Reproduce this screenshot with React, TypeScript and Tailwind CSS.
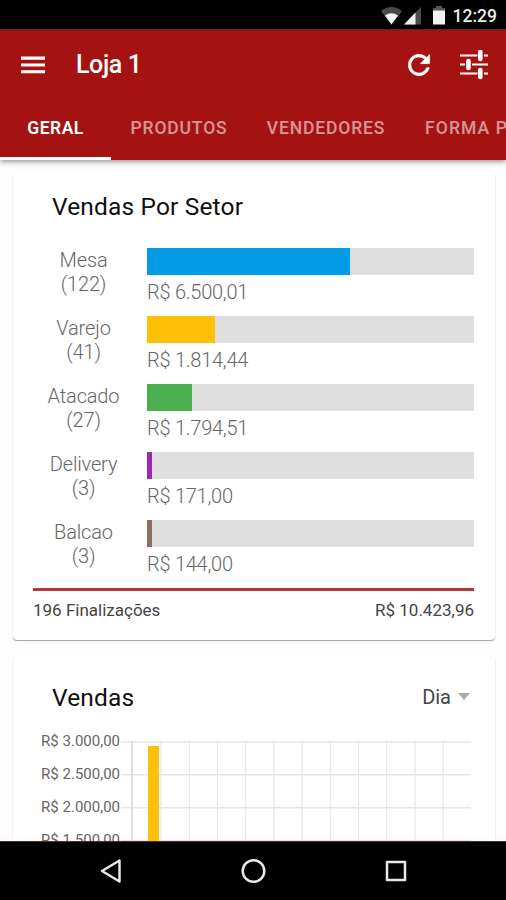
import type { ReactNode } from 'react'
import clsx from 'clsx'

const tabs = ['GERAL', 'PRODUTOS', 'VENDEDORES', 'FORMA PAGAMENTO']

const sectors = [
    { name: 'Mesa', count: 122, total: 'R$ 6.500,01', percent: 62.2, color: 'bg-[#039be5]' },
    { name: 'Varejo', count: 41, total: 'R$ 1.814,44', percent: 20.8, color: 'bg-[#ffc107]' },
    { name: 'Atacado', count: 27, total: 'R$ 1.794,51', percent: 13.8, color: 'bg-[#4caf50]' },
    { name: 'Delivery', count: 3, total: 'R$ 171,00', percent: 1.6, color: 'bg-[#9c27b0]' },
    { name: 'Balcao', count: 3, total: 'R$ 144,00', percent: 1.6, color: 'bg-[#8d6e63]' },
]

const axisLabels = ['R$ 3.000,00', 'R$ 2.500,00', 'R$ 2.000,00', 'R$ 1.500,00']

const Card = ({ className, children }: { className?: string; children: ReactNode }) => (
    <section
        className={clsx(
            'shrink-0 rounded-[4px] bg-white shadow-[0_1px_1px_rgba(0,0,0,0.32),0_1px_2px_rgba(0,0,0,0.06)]',
            className,
        )}
    >
        {children}
    </section>
)

const StatusBar = () => (
    <div className="flex h-[29px] shrink-0 items-start justify-end bg-black pr-[9px] text-white">
        <svg className="mt-[7px] h-[18px] w-[62px]" viewBox="0 0 62 18">
            <path d="M0 4.2Q10.5-4.2 21 4.2L10.5 17.5Z" fill="#4a4a4a" />
            <path d="M4 8.6Q10.5 3.8 17 8.6L10.5 17.5Z" fill="#f2f2f2" />
            <path d="M40 0V17.5H23Z" fill="#4a4a4a" />
            <path d="M34.500 5.500V17.500H23Z" fill="#f2f2f2" />
        </svg>
        <svg className="-ml-[11px] mt-[6px] h-[19px] w-[14px]" viewBox="0 0 14 19">
            <path d="M4 0H10V2H13V6H1V2H4Z" fill="#555" />
            <path d="M1 4.500H13V18.500H1Z" fill="#f2f2f2" />
        </svg>
        <span className="ml-[7px] mt-[4px] text-[17.500px] leading-6 font-medium text-[#ececec]">12:29</span>
    </div>
)

const Header = () => (
    <header className="z-10 flex h-[131px] shrink-0 flex-col border-t border-[#5b2424] bg-[#a51212] text-white shadow-[0_2px_5px_rgba(0,0,0,0.4)]">
        <div className="flex h-[69px] items-center pr-[17px] pl-[17px]">
            <svg className="h-8 w-8" viewBox="0 0 24 24" fill="currentColor">
                <path d="M3 18.200h18v-2.300H3v2.300zm0-5.100h18v-2.300H3v2.300zm0-7.400v2.300h18V5.700H3z" />
            </svg>
            <h1 className="ml-[27px] flex-1 text-[25px] font-medium tracking-[-0.400px]">Loja 1</h1>
            <svg className="h-8 w-8" viewBox="0 0 24 24" fill="currentColor" stroke="currentColor" strokeWidth="0.400">
                <path d="M17.650 6.350C16.200 4.900 14.210 4 12 4c-4.420 0-7.990 3.580-7.990 8s3.570 8 7.990 8c3.730 0 6.840-2.550 7.730-6h-2.080c-.82 2.330-3.040 4-5.650 4-3.310 0-6-2.690-6-6s2.690-6 6-6c1.660 0 3.140.69 4.220 1.780L13 11h7V4l-2.350 2.350z" />
            </svg>
            <svg className="ml-[24px] h-[30px] w-[30px]" viewBox="0 0 30 30" fill="none" stroke="currentColor">
                <path d="M1 5.500H18.500M25 5.500H29M1 14.500H6M13 14.500H29M1 23.500H18.500M25 23.500H29" strokeWidth="2.200" />
                <path d="M21.300 2V9M9.500 11V18M21.300 20V27" strokeWidth="4.600" strokeLinecap="round" />
            </svg>
        </div>
        <nav className="flex h-[61px] overflow-hidden">
            {tabs.map((tab, index) => (
                <button
                    key={tab}
                    className={clsx(
                        'flex shrink-0 items-center justify-center border-b-[3px] text-[17.500px] whitespace-nowrap',
                        index === 0 && 'w-[111px] border-white font-semibold tracking-[0.500px]',
                        index === 1 && 'w-[136px] border-transparent font-medium tracking-[0.850px] text-white/55',
                        index === 2 && 'w-[158px] border-transparent font-medium tracking-[0.850px] text-white/55',
                        index === 3 && 'border-transparent pl-[20px] font-medium tracking-[1.100px] text-white/55',
                    )}
                >
                    {tab}
                </button>
            ))}
        </nav>
    </header>
)

const SectorCard = () => (
    <Card className="h-[467px] pr-[21px] pl-[20px]">
        <h2 className="pt-[17px] pl-[19px] text-[24.500px] leading-[34px] tracking-[0.150px] text-[#111]">Vendas Por Setor</h2>
        <div className="mt-[24px] flex flex-col">
            {sectors.map((sector) => (
                <div key={sector.name} className="flex h-[68px]">
                    <div className="w-[101px] shrink-0 text-center text-[20px] leading-6 font-light tracking-[-0.150px] text-[#666]">
                        <div>{sector.name}</div>
                        <div>({sector.count})</div>
                    </div>
                    <div className="ml-[13px] flex-1">
                        <div className="h-[27px] bg-[#dfdfdf]">
                            <div className={clsx('h-full', sector.color)} style={{ width: `${sector.percent}%` }} />
                        </div>
                        <div className="mt-[5px] text-[20px] leading-6 font-light tracking-[-0.250px] text-[#666]">
                            {sector.total}
                        </div>
                    </div>
                </div>
            ))}
        </div>
        <div className="flex justify-between border-t-[3px] border-[#b33a3a] pt-[7px] text-[17px] leading-6 text-[#444]">
            <span>196 Finalizações</span>
            <span>R$ 10.423,96</span>
        </div>
    </Card>
)

const SalesChart = () => (
    <div className="flex">
        <div className="w-[107px] shrink-0 text-right text-[15px] leading-[33px] text-[#666]">
            {axisLabels.map((label) => (
                <div key={label}>{label}</div>
            ))}
        </div>
        <svg className="mt-[16px] h-[120px] w-[351px]" viewBox="0 0 351 120">
            <g fill="#e6e6e6">
                {[0, 33, 66, 99].map((y) => (
                    <rect key={y} x="1" y={y} width="350" height="1.500" />
                ))}
                {Array.from({ length: 11 }, (_, i) => (
                    <rect key={i} x={40.500 + i * 28.200} y="0" width="1.200" height="120" />
                ))}
            </g>
            <rect x="11" y="0" width="1.800" height="120" fill="#dcdcdc" />
            <rect x="28" y="5" width="11" height="115" fill="#ffc107" />
        </svg>
    </div>
)

const SalesCard = () => (
    <Card className="mt-[17px] h-[400px]">
        <div className="flex items-center pt-[24px] pr-[25px] pl-[39px]">
            <h2 className="flex-1 text-[24.500px] leading-[34px] tracking-[0.150px] text-[#111]">Vendas</h2>
            <span className="-mt-[3px] text-[20px] text-[#444]">Dia</span>
            <svg className="-mt-[3px] ml-[7px] h-[7px] w-[12px]" viewBox="0 0 12 7">
                <path d="M0 0H12L6 7Z" fill="#aaa" />
            </svg>
        </div>
        <div className="mt-[10px]">
            <SalesChart />
        </div>
    </Card>
)

const NavigationBar = () => (
    <div className="z-10 flex h-[59px] shrink-0 justify-between border-t border-[#6b2026] bg-black pr-[97px] pl-[99px]">
        <svg className="mt-[15px] h-7 w-7" viewBox="0 0 28 28" fill="none" stroke="#e8e8e8" strokeWidth="2.500" strokeLinejoin="round">
            <path d="M3 14L20.500 3.500V24.500Z" />
        </svg>
        <svg className="mt-[15px] h-7 w-7" viewBox="0 0 28 28" fill="none" stroke="#e8e8e8" strokeWidth="2.500">
            <circle cx="13.500" cy="14" r="10.800" />
        </svg>
        <svg className="mt-[15px] h-7 w-7" viewBox="0 0 28 28" fill="none" stroke="#e8e8e8" strokeWidth="2.500" strokeLinejoin="round">
            <rect x="6" y="5" width="18" height="18" />
        </svg>
    </div>
)

const App = () => {
    return (
        <div className="flex h-[900px] w-[506px] flex-col overflow-hidden bg-[#fdfdfd] font-[Roboto,sans-serif]">
            <StatusBar />
            <Header />
            <main className="flex min-h-0 flex-1 flex-col overflow-hidden pt-[13px] pr-[11px] pl-[13px]">
                <SectorCard />
                <SalesCard />
            </main>
            <NavigationBar />
        </div>
    )
}

export default App
